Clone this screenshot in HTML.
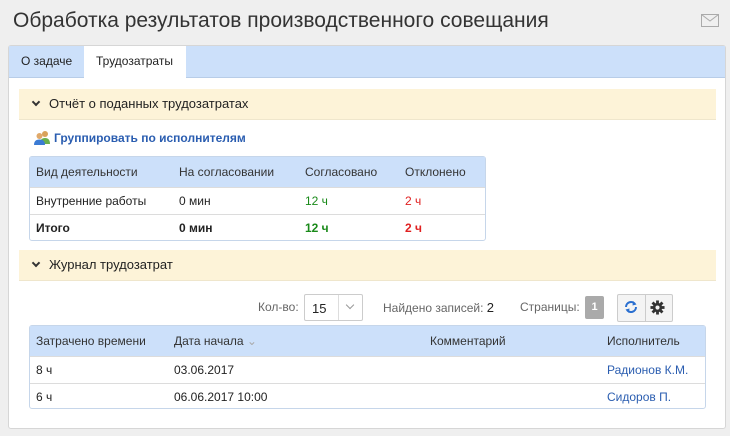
<!DOCTYPE html>
<html><head><meta charset="utf-8"><style>
*{box-sizing:border-box;margin:0;padding:0}
body{width:730px;height:436px;background:#efefef;font-family:"Liberation Sans",sans-serif;font-size:12px;color:#222;position:relative;overflow:hidden}
.abs{position:absolute}
h1{position:absolute;left:13px;top:9px;font-weight:normal;font-size:21px;color:#333}
.panel{left:8px;top:45px;width:718px;height:384px;background:#fff;border:1px solid #d6d6d6;border-radius:3px}
.tabs{left:9px;top:46px;width:716px;height:32px;background:#cce0fa;border-bottom:1px solid #b8cde8}
.tab{position:absolute;top:0;height:32px;line-height:31px;font-size:12px;color:#222}
.sec{left:19px;width:697px;height:31px;background:#fdf3d8;border-bottom:1px solid #efe6cc;line-height:30px;font-size:13px;padding-left:14px}
.chev{display:inline-block;width:6px;height:6px;border-right:2px solid #333;border-bottom:2px solid #333;transform:rotate(45deg);margin-right:10px;position:relative;top:-3px}
table{border-collapse:collapse;position:absolute;font-size:12px}
.tb{border:1px solid #c6d6ea;border-radius:3px}
th{background:#cce0fa;font-weight:normal;color:#333;text-align:left;height:30px;padding-left:6px}
td{height:27px;padding-left:6px;border-top:1px solid #dcdcdc}
.g{color:#1a8a1a}.r{color:#e02020}.b{font-weight:bold}.l{color:#2a5db0}
</style></head><body>
<h1>Обработка результатов производственного совещания</h1>
<svg class="abs" style="left:701px;top:14px" width="18" height="13" viewBox="0 0 18 13"><rect x="0.5" y="0.5" width="17" height="12" fill="none" stroke="#aaa"/><path d="M0.5 0.5 L9 7 L17.5 0.5" fill="none" stroke="#aaa"/></svg>
<div class="abs panel"></div>
<div class="abs tabs">
<div class="tab" style="left:12px">О задаче</div>
<div class="tab" style="left:75px;width:102px;background:#fff;padding-left:12px;height:33px">Трудозатраты</div>
</div>
<div class="abs sec" style="top:89px"><span class="chev"></span>Отчёт о поданных трудозатратах</div>
<svg class="abs" style="left:34px;top:130px" width="17" height="15" viewBox="0 0 17 15"><circle cx="11" cy="4" r="3" fill="#d9a25a"/><path d="M6 14 Q6 8 11 8 Q16 8 16 14Z" fill="#6ab04c"/><circle cx="5.5" cy="6" r="3" fill="#e0a96a"/><path d="M0 15 Q0 9.5 5.5 9.5 Q11 9.5 11 15Z" fill="#3b7bd4"/></svg>
<div class="abs b l" style="left:54px;top:131px;font-size:12px">Группировать по исполнителям</div>
<div class="abs tb" style="left:29px;top:156px;width:457px;height:85px"></div>
<table style="left:30px;top:157px;width:455px">
<tr><th style="width:143px">Вид деятельности</th><th style="width:126px">На согласовании</th><th style="width:100px">Согласовано</th><th>Отклонено</th></tr>
<tr><td>Внутренние работы</td><td>0 мин</td><td class="g">12 ч</td><td class="r">2 ч</td></tr>
<tr class="b"><td>Итого</td><td>0 мин</td><td class="g">12 ч</td><td class="r">2 ч</td></tr>
</table>
<div class="abs sec" style="top:250px"><span class="chev"></span>Журнал трудозатрат</div>
<div class="abs" style="left:258px;top:300px;color:#666">Кол-во:</div>
<div class="abs" style="left:304px;top:294px;width:59px;height:27px;border:1px solid #ccc;border-radius:2px;background:#fff"><span style="position:absolute;left:7px;top:6px;color:#222;font-size:13px">15</span><span style="position:absolute;left:33px;top:0;width:1px;height:25px;background:#ddd"></span><span style="position:absolute;left:42px;top:7px;width:6px;height:6px;border-right:1.5px solid #999;border-bottom:1.5px solid #999;transform:rotate(45deg)"></span></div>
<div class="abs" style="left:383px;top:300px;color:#666">Найдено записей: <span style="color:#222;font-size:13px">2</span></div>
<div class="abs" style="left:520px;top:300px;color:#666">Страницы:</div>
<div class="abs" style="left:585px;top:296px;width:19px;height:23px;background:#aaa;border-radius:2px;color:#fff;font-weight:bold;text-align:center;line-height:23px;font-size:11px">1</div>
<div class="abs" style="left:617px;top:294px;width:56px;height:28px;border:1px solid #ccc;border-radius:2px;background:#f4f4f4"><span style="position:absolute;left:27px;top:0;width:1px;height:26px;background:#ccc"></span></div>
<svg class="abs" style="left:623px;top:299px" width="16" height="16" viewBox="0 0 16 16"><path d="M3 8 A5 5 0 0 1 12 5" fill="none" stroke="#2a6fd0" stroke-width="2"/><path d="M10 2 L13.5 5.5 L9.5 6.5Z" fill="#2a6fd0"/><path d="M13 8 A5 5 0 0 1 4 11" fill="none" stroke="#2a6fd0" stroke-width="2"/><path d="M6 14 L2.5 10.5 L6.5 9.5Z" fill="#2a6fd0"/></svg>
<svg class="abs" style="left:650px;top:300px" width="15" height="15" viewBox="0 0 16 16"><g fill="#333"><circle cx="8" cy="8" r="5"/><rect x="6.5" y="0.5" width="3" height="15"/><rect x="0.5" y="6.5" width="15" height="3"/><rect x="6.5" y="0.5" width="3" height="15" transform="rotate(45 8 8)"/><rect x="6.5" y="0.5" width="3" height="15" transform="rotate(-45 8 8)"/></g><circle cx="8" cy="8" r="2.2" fill="#f4f4f4"/></svg>
<div class="abs tb" style="left:29px;top:325px;width:677px;height:84px"></div>
<table style="left:30px;top:326px;width:675px">
<tr><th style="width:138px">Затрачено времени</th><th style="width:256px">Дата начала <span style="color:#aaa">&#8964;</span></th><th style="width:177px">Комментарий</th><th>Исполнитель</th></tr>
<tr><td>8 ч</td><td>03.06.2017</td><td></td><td class="l">Радионов К.М.</td></tr>
<tr><td>6 ч</td><td>06.06.2017 10:00</td><td></td><td class="l">Сидоров П.</td></tr>
</table>
</body></html>
